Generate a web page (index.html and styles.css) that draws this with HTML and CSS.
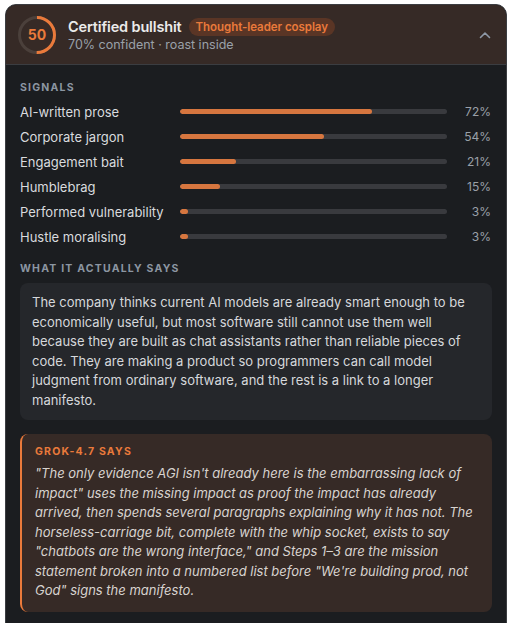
FILE: index.html
```html
<!DOCTYPE html>
<html lang="en">
<head>
  <meta charset="UTF-8">
  <meta name="viewport" content="width=device-width, initial-scale=1.0">
  <title>Verdict</title>
  <link rel="stylesheet" href="styles.css">
</head>
<body>
  <div class="card">
    <div class="card-head">
      <div class="ring">
        <svg width="38" height="38" viewBox="0 0 38 38">
          <circle cx="19" cy="19" r="17.5" fill="none" stroke="#4b403b" stroke-width="3"/>
          <circle cx="19" cy="19" r="17.5" fill="none" stroke="#ea7a3b" stroke-width="3"
                  stroke-dasharray="54.98 109.96" transform="rotate(-90 19 19)"/>
        </svg>
        <span class="ring-num">50</span>
      </div>
      <div class="head-text">
        <div class="title-row">
          <span class="title">Certified bullshit</span>
          <span class="badge">Thought-leader cosplay</span>
        </div>
        <div class="subtitle">70% confident · roast inside</div>
      </div>
      <svg class="chevron" width="12" height="8" viewBox="0 0 12 8">
        <path d="M1.5 6.5 L6 2 L10.5 6.5" fill="none" stroke="#8e99a7" stroke-width="1.6" stroke-linecap="round" stroke-linejoin="round"/>
      </svg>
    </div>

    <div class="card-body">
      <div class="section-label">Signals</div>
      <div class="signals">
        <div class="signal">
          <span class="signal-name">AI-written prose</span>
          <div class="track"><div class="fill" style="width: 72%"></div></div>
          <span class="pct">72%</span>
        </div>
        <div class="signal">
          <span class="signal-name">Corporate jargon</span>
          <div class="track"><div class="fill" style="width: 54%"></div></div>
          <span class="pct">54%</span>
        </div>
        <div class="signal">
          <span class="signal-name">Engagement bait</span>
          <div class="track"><div class="fill" style="width: 21%"></div></div>
          <span class="pct">21%</span>
        </div>
        <div class="signal">
          <span class="signal-name">Humblebrag</span>
          <div class="track"><div class="fill" style="width: 15%"></div></div>
          <span class="pct">15%</span>
        </div>
        <div class="signal">
          <span class="signal-name">Performed vulnerability</span>
          <div class="track"><div class="fill" style="width: 3%"></div></div>
          <span class="pct">3%</span>
        </div>
        <div class="signal">
          <span class="signal-name">Hustle moralising</span>
          <div class="track"><div class="fill" style="width: 3%"></div></div>
          <span class="pct">3%</span>
        </div>
      </div>

      <div class="section-label says-label">What it actually says</div>
      <div class="summary">
        The company thinks current AI models are already smart enough to be economically useful, but most software still cannot use them well because they are built as chat assistants rather than reliable pieces of code. They are making a product so programmers can call model judgment from ordinary software, and the rest is a link to a longer manifesto.
      </div>

      <div class="roast">
        <div class="roast-label">Grok-4.7 says</div>
        <p class="roast-text">"The only evidence AGI isn't already here is the embarrassing lack of impact" uses the missing impact as proof the impact has already arrived, then spends several paragraphs explaining why it has not. The horseless-carriage bit, complete with the whip socket, exists to say "chatbots are the wrong interface," and Steps 1–3 are the mission statement broken into a numbered list before "We're building prod, not God" signs the manifesto.</p>
      </div>
    </div>
  </div>
</body>
</html>
```

FILE: styles.css
```css
body {
  margin: 4px 8px 0 5px;
  background: #ffffff;
  font-family: Inter, "Noto Sans", sans-serif;
  color: #d6d8db;
}
.card {
  background: #1b1d20;
  border: 1px solid #3b3d41;
  border-radius: 11px;
  overflow: hidden;
}
.card-head {
  display: flex;
  align-items: center;
  gap: 12px;
  height: 59px;
  padding: 0 15px 0 12px;
  background: #362a26;
  border-bottom: 1px solid #3b3d41;
}
.ring {
  position: relative;
  width: 38px;
  height: 38px;
  flex: none;
}
.ring svg {
  display: block;
}
.ring-num {
  position: absolute;
  inset: 0;
  display: flex;
  align-items: center;
  justify-content: center;
  color: #ea7a3b;
  font-size: 14px;
  font-weight: 700;
}
.head-text {
  flex: 1;
  min-width: 0;
}
.title-row {
  display: flex;
  align-items: center;
  gap: 7px;
}
.title {
  font-size: 14.5px;
  font-weight: 600;
  color: #ebebeb;
  letter-spacing: -0.15px;
}
.badge {
  padding: 0 7px;
  border-radius: 9px;
  background: #5a3525;
  color: #ea7a3b;
  font-size: 11.5px;
  font-weight: 600;
  line-height: 18px;
  letter-spacing: -0.05px;
}
.subtitle {
  margin-top: 1px;
  font-size: 12.5px;
  color: #9aa1a9;
}
.chevron {
  flex: none;
}
.card-body {
  padding: 16px 14px 24px 14px;
}
.section-label {
  font-size: 10.5px;
  font-weight: 700;
  letter-spacing: 1.2px;
  text-transform: uppercase;
  color: #8c96a2;
  line-height: 14px;
}
.signals {
  margin-top: 4px;
  display: flex;
  flex-direction: column;
}
.signal {
  display: flex;
  align-items: center;
  height: 25px;
}
.signal-name {
  width: 160px;
  flex: none;
  font-size: 13px;
  color: #d9dbde;
}
.track {
  width: 267px;
  height: 5px;
  border-radius: 3px;
  background: #393a3e;
  overflow: hidden;
}
.fill {
  height: 100%;
  border-radius: 3px;
  background: #d6763f;
}
.pct {
  width: 44px;
  text-align: right;
  font-size: 12px;
  color: #9aa0a8;
}
.says-label {
  margin-top: 13px;
}
.summary {
  margin-top: 7px;
  padding: 10px 12px;
  border-radius: 8px;
  background: #25272b;
  font-size: 13px;
  line-height: 19.5px;
  color: #d6d8db;
}
.roast {
  margin-top: 14px;
  padding: 11px 14px 11px 13px;
  border-left: 2px solid #ea7a3b;
  border-radius: 8px;
  background: #362a26;
}
.roast-label {
  font-size: 10.5px;
  font-weight: 700;
  letter-spacing: 1.2px;
  text-transform: uppercase;
  color: #ea7a3b;
  line-height: 14px;
}
.roast-text {
  margin: 5px 0 0;
  font-size: 13px;
  line-height: 19.5px;
  font-style: italic;
  color: #d8d3cf;
}
```
